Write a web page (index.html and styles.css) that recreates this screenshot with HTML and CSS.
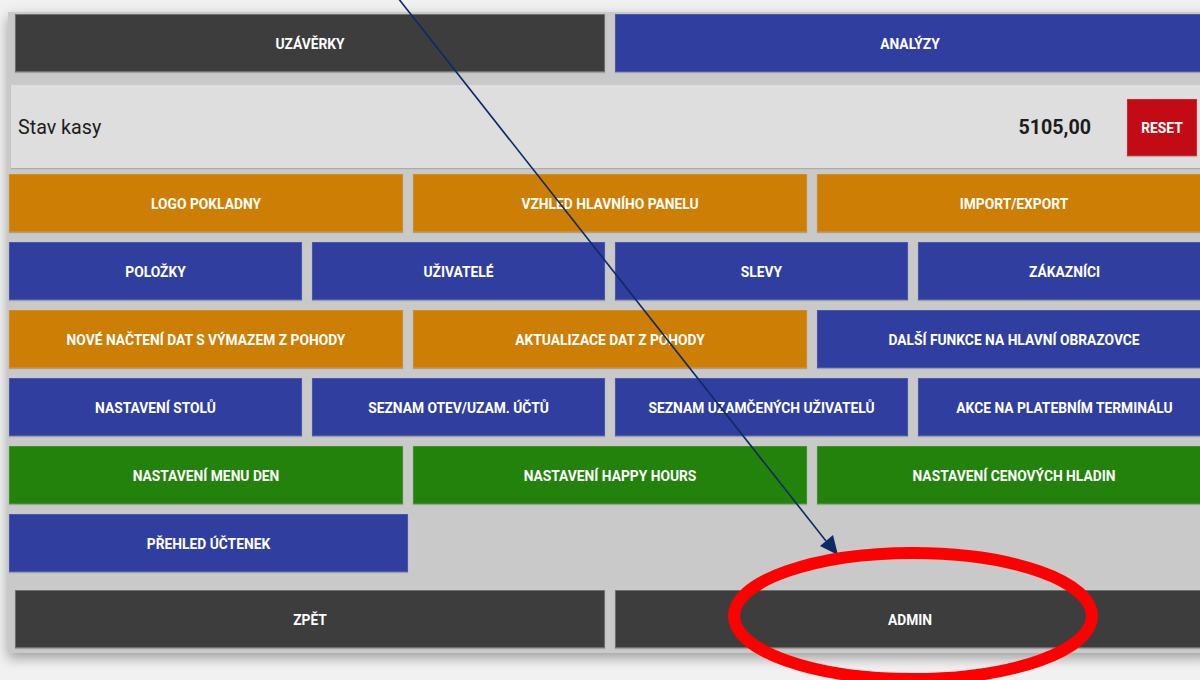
FILE: index.html
```html
<!DOCTYPE html>
<html lang="cs">
<head>
    <meta charset="UTF-8">
    <meta name="viewport" content="width=device-width, initial-scale=1.0">
    <title>Nastavení pokladny</title>
    <link rel="stylesheet" href="styles.css">
</head>
<body>
    <div class="panel">
        <div class="pair">
            <div class="btn dark">UZÁVĚRKY</div>
            <div class="btn blue">ANALÝZY</div>
        </div>

        <div class="cash">
            <span class="cash-label">Stav kasy</span>
            <span class="cash-value">5105,00</span>
            <div class="btn red reset">RESET</div>
        </div>

        <div class="grid">
            <div class="btn orange w3">LOGO POKLADNY</div>
            <div class="btn orange w3">VZHLED HLAVNÍHO PANELU</div>
            <div class="btn orange w3">IMPORT/EXPORT</div>

            <div class="btn blue w4">POLOŽKY</div>
            <div class="btn blue w4">UŽIVATELÉ</div>
            <div class="btn blue w4">SLEVY</div>
            <div class="btn blue w4">ZÁKAZNÍCI</div>

            <div class="btn orange w3">NOVÉ NAČTENÍ DAT S VÝMAZEM Z POHODY</div>
            <div class="btn orange w3">AKTUALIZACE DAT Z POHODY</div>
            <div class="btn blue w3">DALŠÍ FUNKCE NA HLAVNÍ OBRAZOVCE</div>

            <div class="btn blue w4">NASTAVENÍ STOLŮ</div>
            <div class="btn blue w4">SEZNAM OTEV/UZAM. ÚČTŮ</div>
            <div class="btn blue w4">SEZNAM UZAMČENÝCH UŽIVATELŮ</div>
            <div class="btn blue w4">AKCE NA PLATEBNÍM TERMINÁLU</div>

            <div class="btn green w3">NASTAVENÍ MENU DEN</div>
            <div class="btn green w3">NASTAVENÍ HAPPY HOURS</div>
            <div class="btn green w3">NASTAVENÍ CENOVÝCH HLADIN</div>

            <div class="btn blue w3 wide">PŘEHLED ÚČTENEK</div>
        </div>

        <div class="pair bottom">
            <div class="btn dark">ZPĚT</div>
            <div class="btn dark">ADMIN</div>
        </div>
    </div>

    <!-- annotation drawn over the screenshot -->
    <svg class="marks" width="1200" height="680" viewBox="0 0 1200 680">
        <line x1="398" y1="-2" x2="826" y2="541" stroke="#0b2a66" stroke-width="1.6"/>
        <polygon points="838,555 820,546 833,535" fill="#0b2a66"/>
        <ellipse cx="913" cy="616" rx="179" ry="63" fill="none" stroke="#ff0000" stroke-width="12"/>
    </svg>
</body>
</html>
```

FILE: styles.css
```css
body {
    margin: 0;
    padding: 0;
    background-color: #f1f1f1;
    font-family: Roboto, "Liberation Sans", Arial, sans-serif;
    overflow: hidden;
    width: 1200px;
    height: 680px;
    position: relative;
}

.panel {
    margin: 12px 0 0 8px;
    width: 1204px;
    height: 641px;
    box-sizing: border-box;
    background-color: #c9c9c9;
    padding: 2px 1px 0 1px;
    box-shadow: 0 5px 12px rgba(0, 0, 0, 0.35);
}

.btn {
    display: flex;
    justify-content: center;
    align-items: center;
    box-sizing: border-box;
    height: 58px;
    padding-top: 1px;
    color: #ffffff;
    font-size: 13.8px;
    font-weight: bold;
    border: 1px solid rgba(255, 255, 255, 0.12);
    box-shadow: 0 1px 1px rgba(0, 0, 0, 0.2);
    text-align: center;
}

.dark { background-color: #3d3d3d; border-color: #6f6f6f; }
.blue { background-color: #303f9f; }
.orange { background-color: #cd7e04; }
.green { background-color: #23820b; }
.red { background-color: #c30b16; }

.pair {
    display: grid;
    grid-template-columns: 1fr 1fr;
    gap: 10px;
    padding: 0 6px;
}

.pair.bottom {
    margin-top: 18px;
}

.cash {
    display: flex;
    align-items: center;
    margin: 13px 1px 6px 2px;
    height: 83px;
    padding: 2px 13px 0 7px;
    box-sizing: border-box;
    background-color: #dedede;
    box-shadow: 0 1px 1px rgba(0, 0, 0, 0.15);
    color: #1c1c1c;
    font-size: 19.7px;
}

.cash-label {
    flex: 1;
}

.cash-value {
    font-weight: bold;
    margin-right: 36px;
}

.reset {
    width: 70px;
    height: 57px;
    font-size: 13.8px;
}

.grid {
    display: grid;
    grid-template-columns: repeat(12, 1fr);
    grid-auto-rows: 58px;
    gap: 10px;
}

.w3 { grid-column: span 4; }
.w4 { grid-column: span 3; }
.wide { margin-right: -5px; }

.marks {
    position: absolute;
    top: 0;
    left: 0;
    pointer-events: none;
}
```
